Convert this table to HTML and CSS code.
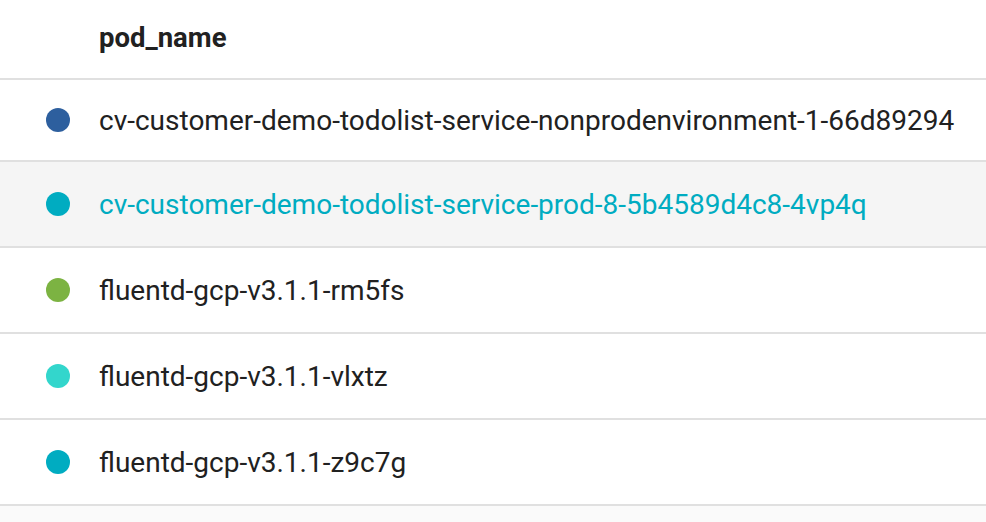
FILE: index.html
```html
<!DOCTYPE html>
<html>
<head>
<meta charset="utf-8">
<link rel="stylesheet" href="styles.css">
</head>
<body>
<div class="table">
  <div class="head"><span class="head-label">pod_name</span></div>
  <div class="row first">
    <span class="dot c1"></span><span class="name">cv-customer-demo-todolist-service-nonprodenvironment-1-66d89294</span>
  </div>
  <div class="row active">
    <span class="dot c2"></span><span class="name">cv-customer-demo-todolist-service-prod-8-5b4589d4c8-4vp4q</span>
  </div>
  <div class="row">
    <span class="dot c3"></span><span class="name">fluentd-gcp-v3.1.1-rm5fs</span>
  </div>
  <div class="row">
    <span class="dot c4"></span><span class="name">fluentd-gcp-v3.1.1-vlxtz</span>
  </div>
  <div class="row">
    <span class="dot c2"></span><span class="name">fluentd-gcp-v3.1.1-z9c7g</span>
  </div>
  <div class="row tail"></div>
</div>
</body>
</html>
```
FILE: styles.css
```css
html, body {
  margin: 0;
  padding: 0;
  background: #ffffff;
}
body {
  font-family: Roboto, "Liberation Sans", sans-serif;
  color: #212121;
  overflow: hidden;
  height: 522px;
}
.table {
  display: flex;
  flex-direction: column;
}
.head {
  height: 78px;
  border-bottom: 2px solid #e0e0e0;
  display: flex;
  align-items: center;
  padding-left: 99px;
}
.head-label {
  font-weight: 700;
  font-size: 27.5px;
  margin-top: -4px;
}
.row {
  height: 84px;
  border-bottom: 2px solid #e0e0e0;
  display: flex;
  align-items: center;
  padding-left: 46px;
  font-size: 28px;
}
.row.first {
  height: 80px;
}
.row.active {
  background: #f5f5f5;
}
.row.active .name {
  color: #00acc1;
}
.row.tail {
  height: 16px;
  background: #fafafa;
  border-bottom: none;
}
.dot {
  width: 24px;
  height: 24px;
  border-radius: 50%;
  flex: none;
  margin-right: 29px;
}
.c1 { background: #2d5f9e; }
.c2 { background: #00acc1; }
.c3 { background: #7cb342; }
.c4 { background: #33d6cc; }
```
